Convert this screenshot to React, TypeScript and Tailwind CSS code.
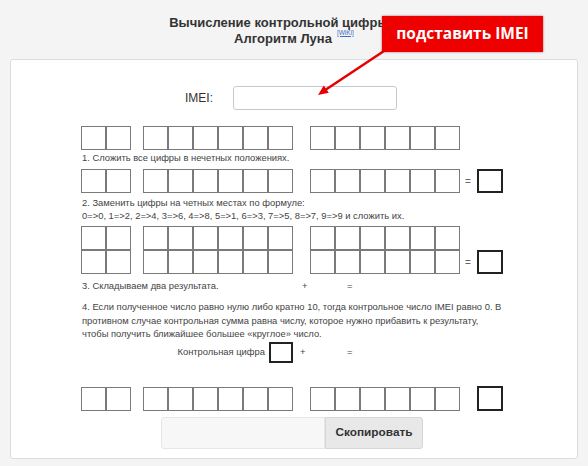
import React from 'react';

// digit cell used by all the IMEI rows
function Cell() {
  return <div className="w-[25px] h-[24px] border border-[#7a7a7a] bg-white" />;
}

function Group({ n, rows = 1 }: { n: number; rows?: number }) {
  return (
    <div className="flex flex-col">
      {Array.from({ length: rows }).map((_, r) => (
        <div key={r} className="flex">
          {Array.from({ length: n }).map((_, i) => (
            <Cell key={i} />
          ))}
        </div>
      ))}
    </div>
  );
}

function SumBox({ h = 'h-[24px]', w = 'w-[26px]' }: { h?: string; w?: string }) {
  return <div className={`${w} ${h} border-2 border-[#222] bg-white`} />;
}

function DigitRow({ rows = 1, tail }: { rows?: number; tail: 'sum' | 'box' | 'none' }) {
  return (
    <div className="flex items-end">
      <Group n={2} rows={rows} />
      <div className="ml-[12px]">
        <Group n={6} rows={rows} />
      </div>
      <div className="ml-[17px]">
        <Group n={6} rows={rows} />
      </div>
      {tail === 'sum' && (
        <div className="flex items-center h-[24px]">
          <span className="ml-[5px] w-[6px] text-[10px] text-[#666]">=</span>
          <div className="ml-[6px]">
            <SumBox />
          </div>
        </div>
      )}
      {tail === 'box' && (
        <div className="ml-[17px]">
          <SumBox h="h-[25px]" />
        </div>
      )}
    </div>
  );
}

export default function App() {
  return (
    <div className="relative w-[588px] h-[466px] overflow-hidden bg-[#f4f4f4] font-['Liberation_Sans',Arial,sans-serif] text-[#444]">
      <div className="pt-[15px] text-center text-[13px] font-bold leading-[16px] text-[#333]">
        <div>Вычисление контрольной цифры IMEI</div>
        <div>
          Алгоритм Луна
          <sup className="ml-[5px] text-[6.5px] font-normal text-[#3b6fc9] underline align-[5px]">[WiKi]</sup>
        </div>
      </div>

      <div className="mx-[10px] mt-[12px] h-[400px] rounded-[3px] border border-[#dcdcdc] bg-white">
        <div className="mt-[26px] ml-[174px] flex items-center">
          <span className="w-[48px] text-[12px] text-[#333]">IMEI:</span>
          <div className="w-[164px] h-[24px] rounded-[3px] border border-[#c8c8c8] bg-white" />
        </div>

        <div className="ml-[70px] text-[9.4px] text-[#444]">
          <div className="mt-[16px]">
            <DigitRow tail="none" />
          </div>
          <p className="mt-[1px] pl-[1px] leading-[14px]">1. Сложить все цифры в нечетных положениях.</p>
          <div className="mt-[4px]">
            <DigitRow tail="sum" />
          </div>
          <p className="mt-[3px] pl-[1px] leading-[13px]">
            2. Заменить цифры на четных местах по формуле:
            <br />
            0=&gt;0, 1=&gt;2, 2=&gt;4, 3=&gt;6, 4=&gt;8, 5=&gt;1, 6=&gt;3, 7=&gt;5, 8=&gt;7, 9=&gt;9 и сложить их.
          </p>
          <div className="mt-[4px]">
            <DigitRow rows={2} tail="sum" />
          </div>
          <div className="mt-[5px] pl-[1px] flex leading-[14px]">
            <span className="w-[220px]">3. Складываем два результата.</span>
            <span className="w-[6px] text-[#444]">+</span>
            <span className="ml-[39px]">=</span>
          </div>
          <p className="mt-[7px] pl-[1px] leading-[13.5px] whitespace-nowrap">
            4. Если полученное число равно нулю либо кратно 10, тогда контрольное число IMEI равно 0. В
            <br />
            противном случае контрольная сумма равна числу, которое нужно прибавить к результату,
            <br />
            чтобы получить ближайшее большее «круглое» число.
          </p>
          <div className="mt-[1px] flex items-center h-[21px]">
            <span className="w-[188px] pr-[4px] text-right">Контрольная цифра</span>
            <div className="w-[24px] h-[21px] border-2 border-[#222] bg-white" />
            <span className="ml-[7px] w-[6px] text-[#444]">+</span>
            <span className="ml-[41px]">=</span>
          </div>
          <div className="mt-[23px]">
            <DigitRow tail="box" />
          </div>
        </div>

        <div className="mt-[6px] ml-[150px] flex h-[32px]">
          <div className="w-[164px] h-full rounded-l-[3px] border border-[#e6e6e6] bg-[#f7f7f7]" />
          <button className="w-[98px] h-full rounded-r-[3px] border border-[#d6d6d6] bg-[#e8e8e8] text-[11.8px] font-bold text-[#333]">
            Скопировать
          </button>
        </div>
      </div>

      <div className="absolute left-[382px] top-[16px] w-[161px] h-[36px] flex items-center justify-center bg-[#ee0000] shadow-[0_0_2px_rgba(120,0,0,0.6)] font-['Open_Sans',sans-serif] text-[15.5px] font-bold text-white">
        подставить IMEI
      </div>
      <svg className="absolute left-0 top-0 pointer-events-none" width="588" height="466">
        <line x1="384" y1="51" x2="326" y2="89.5" stroke="#e60000" strokeWidth="2.5" />
        <polygon points="318,95 328.8,92.8 323.8,85.4" fill="#e60000" />
      </svg>
    </div>
  );
}
